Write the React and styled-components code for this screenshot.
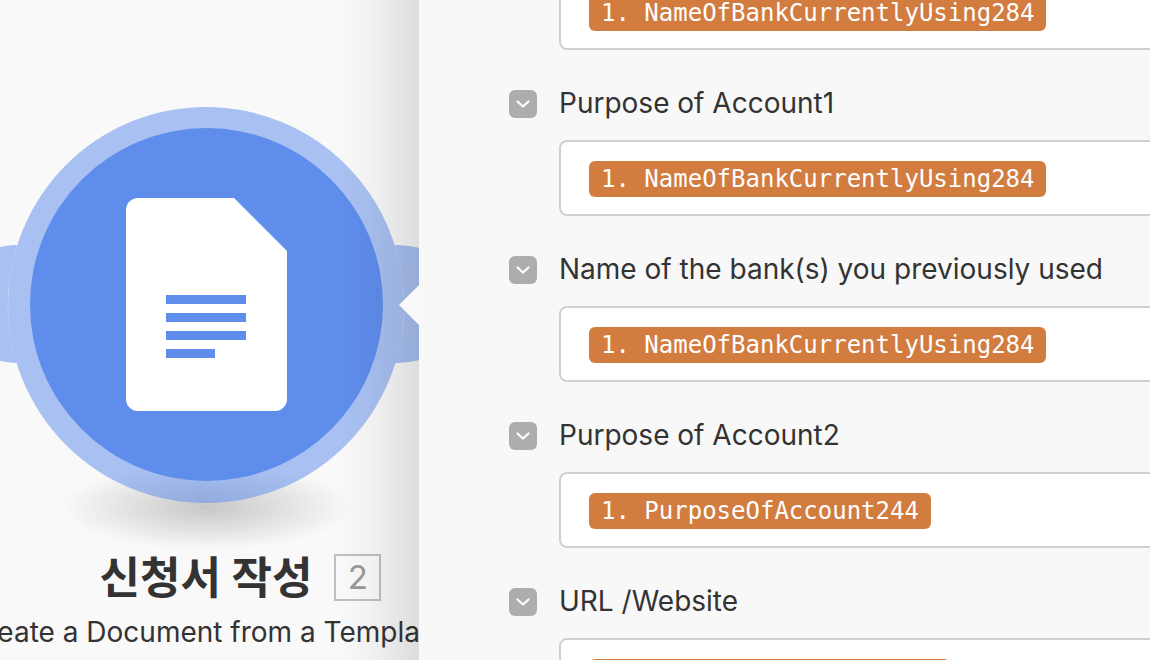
import React from 'react';
import styled, { createGlobalStyle } from 'styled-components';

const GlobalStyle = createGlobalStyle`
    html, body {
        margin: 0;
        padding: 0;
        background: #f8f8f8;
    }
    #root {
        width: 1150px;
        height: 660px;
        overflow: hidden;
    }
`;

const Page = styled.div`
    display: flex;
    width: 1150px;
    height: 660px;
    overflow: hidden;
    font-family: Inter, "Noto Sans CJK KR", sans-serif;
    color: #333;
`;

// canvas on the left, the module node sits on it at its own spot
const Canvas = styled.div`
    position: relative;
    flex: 0 0 419px;
    height: 660px;
    overflow: hidden;
    background: #f9f9f9;
`;

const Drawing = styled.svg`
    position: absolute;
    left: 0;
    top: 0;
`;

const NodeShadow = styled.div`
    position: absolute;
    left: 62px;
    top: 464px;
    width: 290px;
    height: 86px;
    border-radius: 50%;
    background: radial-gradient(closest-side, rgba(0, 0, 0, 0.2) 0%, rgba(0, 0, 0, 0.1) 50%, rgba(0, 0, 0, 0) 100%);
`;

const Halo = styled.div`
    position: absolute;
    left: 8px;
    top: 107px;
    width: 396px;
    height: 396px;
    box-sizing: border-box;
    padding: 21px 21px 22px 22px;
    border-radius: 50%;
    background: rgba(95, 141, 236, 0.52);
`;

const Disc = styled.div`
    width: 353px;
    height: 353px;
    border-radius: 50%;
    background: #5f8dec;
    display: flex;
    align-items: center;
    justify-content: center;
`;

const EdgeFade = styled.div`
    position: absolute;
    right: 0;
    top: 0;
    width: 80px;
    height: 660px;
    background: linear-gradient(to right, rgba(0, 0, 0, 0), rgba(0, 0, 0, 0.03) 40%, rgba(0, 0, 0, 0.115));
`;

const Caption = styled.div`
    position: absolute;
    left: -40px;
    top: 552px;
    width: 492px;
    display: flex;
    flex-direction: column;
    align-items: center;
`;

const TitleRow = styled.div`
    display: flex;
    align-items: center;
    gap: 22px;
    height: 51px;
`;

const Title = styled.div`
    font-size: 44px;
    font-weight: 700;
    line-height: 50px;
    color: #333;
    white-space: nowrap;
`;

// hangs off the title, the title alone is what gets centred
const IdBadge = styled.div`
    width: 47px;
    height: 47px;
    margin-right: -69px;
    box-sizing: border-box;
    border: 2px solid #bfbfbf;
    color: #999;
    font-size: 33px;
    line-height: 43px;
    text-align: center;
`;

const Subtitle = styled.div`
    margin-top: 11px;
    font-size: 28px;
    line-height: 36px;
    color: #333;
    white-space: nowrap;
`;

const Panel = styled.div`
    flex: 1;
    height: 660px;
    overflow: hidden;
    background: #f8f8f8;
    padding-left: 90px;
    display: flex;
    flex-direction: column;
`;

const Field = styled.div`
    flex: none;
    margin-bottom: 38px;
`;

const Label = styled.div`
    display: flex;
    align-items: center;
    gap: 22px;
    height: 32px;
    margin-bottom: 20px;
`;

const LabelText = styled.span`
    margin-top: -2px;
    font-size: 28px;
    line-height: 30px;
    color: #333;
    white-space: nowrap;
`;

const Toggle = styled.div`
    flex: none;
    width: 28px;
    height: 28px;
    border-radius: 6px;
    background: #adadad;
    display: flex;
    align-items: center;
    justify-content: center;
`;

const Input = styled.div`
    box-sizing: border-box;
    width: 640px;
    height: 76px;
    margin-left: 50px;
    padding: 19px 28px;
    background: #fff;
    border: 2px solid #d0d0d0;
    border-radius: 8px;
    display: flex;
    align-items: flex-start;
`;

const FirstInput = styled(Input)`
    flex: none;
    margin-top: -26px;
    margin-bottom: 38px;
`;

const Pill = styled.span`
    height: 36px;
    padding: 0 12px;
    border-radius: 6px;
    background: #d27c40;
    color: #fff;
    font-family: "DejaVu Sans Mono", monospace;
    font-size: 24px;
    line-height: 36px;
    white-space: nowrap;
    min-width: ${(p) => p.$minWidth || 0}px;
`;

const fields = [
    { label: 'Purpose of Account1', pill: '1. NameOfBankCurrentlyUsing284' },
    { label: 'Name of the bank(s) you previously used', pill: '1. NameOfBankCurrentlyUsing284' },
    { label: 'Purpose of Account2', pill: '1. PurposeOfAccount244' },
    { label: 'URL /Website', pill: '1. CompanyWebsiteURL285', minWidth: 337 },
];

const Chevron = () => (
    <svg width="16" height="16" viewBox="0 0 16 16" fill="none">
        <path d="M2.5 5.5 L8 10.5 L13.5 5.5" stroke="#fff" strokeWidth="2.2" strokeLinecap="round" strokeLinejoin="round" />
    </svg>
);

const DocIcon = () => (
    <svg width="161" height="213" viewBox="0 0 161 213">
        <path d="M12 0 H108 L161 53 V201 a12 12 0 0 1 -12 12 H12 a12 12 0 0 1 -12 -12 V12 a12 12 0 0 1 12 -12 Z" fill="#fff" />
        <rect x="40" y="97" width="80" height="9" fill="#5f8dec" />
        <rect x="40" y="115" width="80" height="9" fill="#5f8dec" />
        <rect x="40" y="133" width="80" height="9" fill="#5f8dec" />
        <rect x="40" y="151" width="49" height="9" fill="#5f8dec" />
    </svg>
);

export default function App() {
    return (
        <Page>
            <GlobalStyle />
            <Canvas>
                <NodeShadow />
                <Drawing width="419" height="660" viewBox="0 0 419 660">
                    <path d="M-5 248 C4 246 11 245 17.3 245 A198 198 0 0 0 16.7 363 C11 363 4 362 -5 360 Z" fill="#a9c1f2" />
                    <path d="M394.7 245 C402 245 412 246 419 248 V360 C412 362 402 363 395.3 363 A198 198 0 0 0 394.7 245 Z" fill="#a9c1f2" />
                </Drawing>
                <Halo>
                    <Disc>
                        <DocIcon />
                    </Disc>
                </Halo>
                <Caption>
                    <TitleRow>
                        <Title>신청서 작성</Title>
                        <IdBadge>2</IdBadge>
                    </TitleRow>
                    <Subtitle>Create a Document from a Template</Subtitle>
                </Caption>
                <EdgeFade />
                <Drawing width="419" height="660" viewBox="0 0 419 660">
                    <path d="M419 285 L399 305 L419 325 Z" fill="#f9f9f9" />
                </Drawing>
            </Canvas>
            <Panel>
                <FirstInput>
                    <Pill>1. NameOfBankCurrentlyUsing284</Pill>
                </FirstInput>
                {fields.map((f) => (
                    <Field key={f.label}>
                        <Label>
                            <Toggle><Chevron /></Toggle>
                            <LabelText>{f.label}</LabelText>
                        </Label>
                        <Input>
                            <Pill $minWidth={f.minWidth}>{f.pill}</Pill>
                        </Input>
                    </Field>
                ))}
            </Panel>
        </Page>
    );
}
